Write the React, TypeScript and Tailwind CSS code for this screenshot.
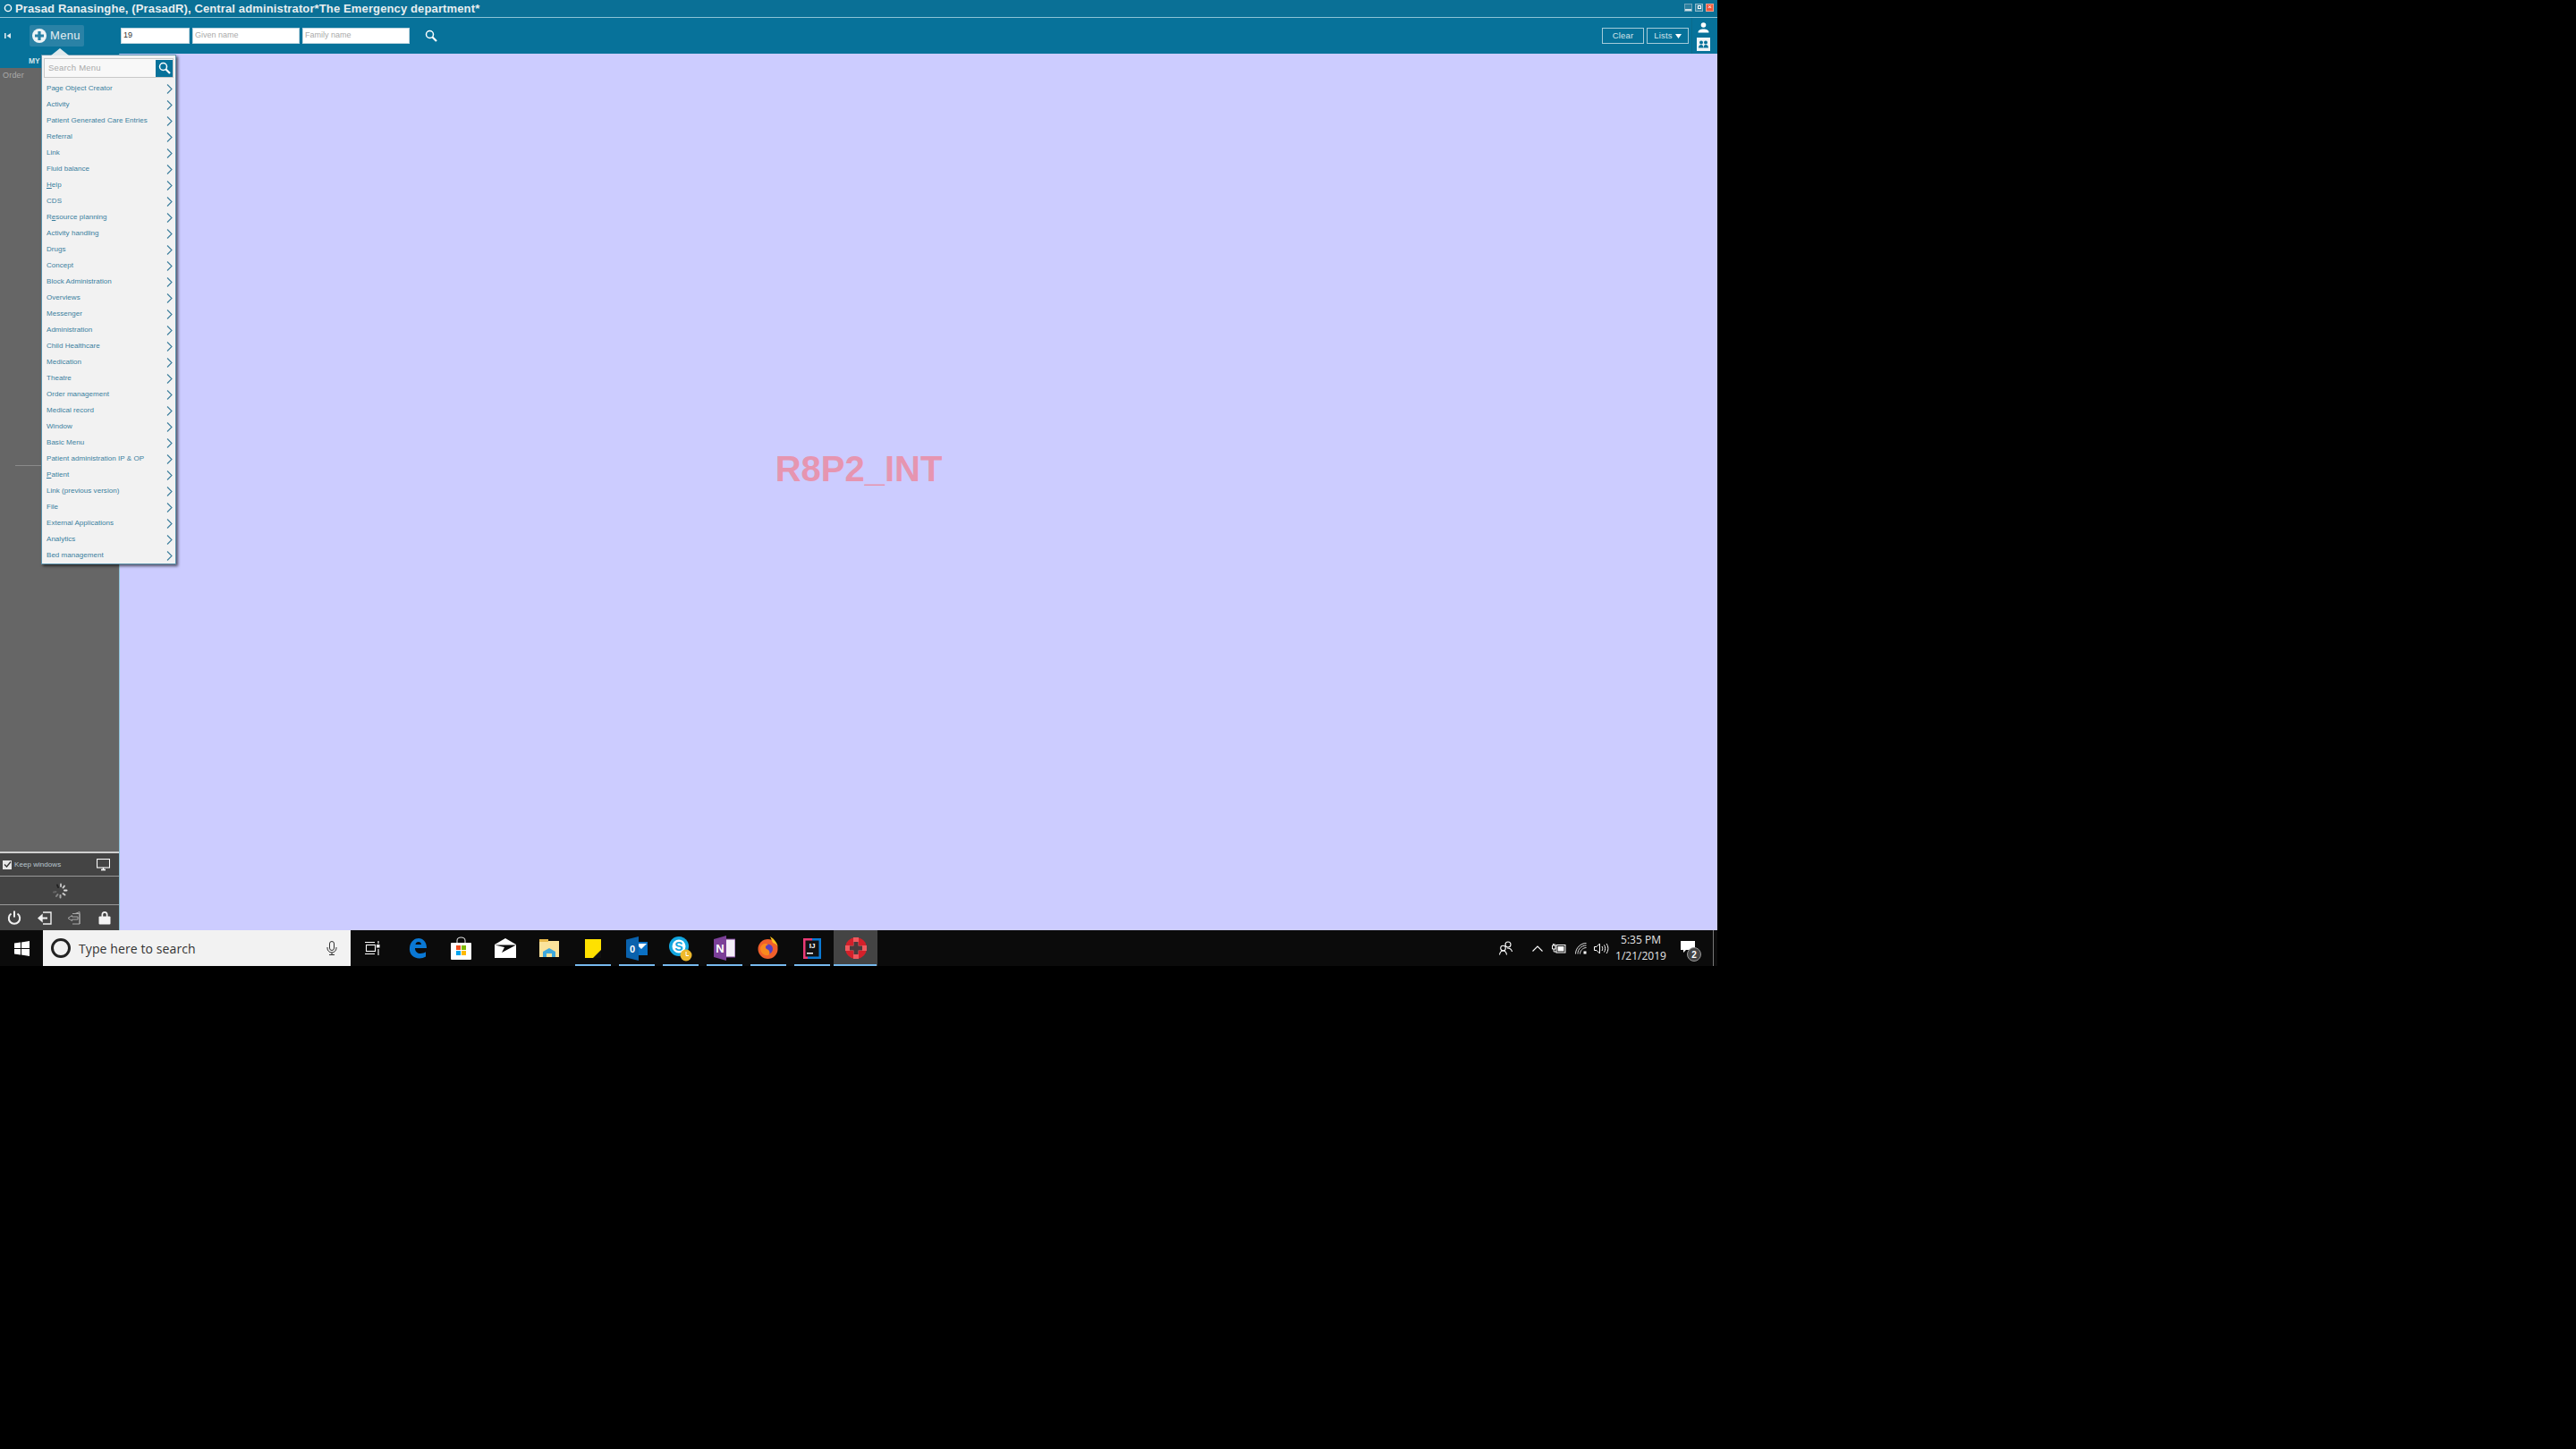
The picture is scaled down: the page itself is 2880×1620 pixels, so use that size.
import React from "react";

const items: [string, string?, string?][] = [
  ["Page Object Creator"], ["Activity"], ["Patient Generated Care Entries"], ["Referral"], ["Link"], ["Fluid balance"],
  ["", "H", "elp"], ["CDS"], ["R", "e", "source planning"], ["Activity handling"], ["Drugs"], ["Concept"],
  ["Block Administration"], ["Overviews"], ["Messenger"], ["Administration"], ["Child Healthcare"], ["Medication"],
  ["Theatre"], ["Order management"], ["Medical record"], ["Window"], ["Basic Menu"], ["Patient administration IP & OP"],
  ["", "P", "atient"], ["Link (previous version)"], ["File"], ["External Applications"], ["Analytics"], ["Bed management"],
];

function SearchIcon({ size = 14 }: { size?: number }) {
  return (
    <svg width={size} height={size} viewBox="0 0 14 14" fill="none" stroke="white">
      <circle cx="5.5" cy="5.5" r="4" strokeWidth="1.5" />
      <path d="M8.5 8.5L13 13" strokeWidth="2.2" />
    </svg>
  );
}

function Chevron() {
  return (
    <svg width="7" height="11" viewBox="0 0 7 11" fill="none" stroke="#3d7f9d" strokeWidth="1.1">
      <path d="M1 0.5L6 5.5L1 10.5" />
    </svg>
  );
}

function MenuPopup() {
  return (
    <div className="absolute left-[46px] top-[61px] w-[151px] h-[570px] bg-[#f2f2f2] border border-[#5b93ad] shadow-[2px_2px_3px_rgba(0,0,0,0.6)] z-10 flex flex-col">
      <div className="absolute left-[10px] -top-[8px] w-0 h-0 border-l-[10px] border-r-[10px] border-b-[8px] border-l-transparent border-r-transparent border-b-[#dfe9ec]" />
      <div className="mx-[2px] mt-[3px] h-[22px] bg-[#f8f8f8] border border-[#c8c8c8] flex items-center justify-between pl-[4px] pr-0">
        <span className="text-[9.5px] text-[#aaaaaa] tracking-[0.2px]">Search Menu</span>
        <span className="w-[19px] h-[19px] bg-[#07729a] flex items-center justify-center">
          <SearchIcon />
        </span>
      </div>
      <div className="flex flex-col mt-[3px]">
        {items.map((it, i) => (
          <div key={i} className="h-[18px] flex items-center justify-between pl-[5px] pr-[3px] text-[8px] text-[#3a7f9e] tracking-[0.04px] whitespace-nowrap">
            <span>
              {it[1] ? (
                <>
                  {it[0]}
                  <u>{it[1]}</u>
                  {it[2]}
                </>
              ) : (
                it[0]
              )}
            </span>
            <Chevron />
          </div>
        ))}
      </div>
    </div>
  );
}

function TitleBar() {
  return (
    <div className="h-[20px] shrink-0 bg-[#0a7096] border-b border-[#8cc3d6] flex items-center pl-[4px] pr-[4px]">
      <svg width="10" height="10" viewBox="0 0 10 10" fill="none" stroke="white" strokeWidth="1.4" className="mr-[3px] -mt-[1px]">
        <circle cx="5" cy="5" r="3.6" />
      </svg>
      <span className="text-[13px] font-bold text-[#e8eef0] tracking-[0.13px] whitespace-nowrap">
        Prasad Ranasinghe, (PrasadR), Central administrator*The Emergency department*
      </span>
      <div className="ml-auto flex gap-[3px] -mt-[3px]">
        <div className="w-[9px] h-[9px] border border-[#6fa5bb] bg-[#2c7f9f] flex items-end"><div className="w-full h-[2px] bg-[#cfe0e6]" /></div>
        <div className="w-[9px] h-[9px] border border-[#8fb9c9] bg-[#3d89a6] flex items-center justify-center"><div className="w-[4px] h-[4px] border border-white" /></div>
        <div className="w-[9px] h-[9px] bg-[#f0583c] border border-[#f5a08e] flex items-center justify-center text-white text-[8px] leading-none">×</div>
      </div>
    </div>
  );
}

function Toolbar() {
  return (
    <div className="h-[40px] shrink-0 bg-[#07729a] flex items-center">
      <svg width="8" height="8" viewBox="0 0 8 8" fill="#dfeaee" className="ml-[5px] mr-[20px]">
        <rect x="0" y="1" width="1.6" height="6" />
        <path d="M7 1V7L2.5 4Z" />
      </svg>
      <div className="w-[61px] h-[24px] bg-[#2a82a6] rounded-[2px] flex items-center pl-[3px] gap-[4px]">
        <svg width="16" height="16" viewBox="0 0 16 16">
          <circle cx="8" cy="8" r="8" fill="#eef4f6" />
          <path d="M6.4 3H9.6V6.4H13V9.6H9.6V13H6.4V9.6H3V6.4H6.4Z" fill="#2a82a6" />
        </svg>
        <span className="text-[13px] text-[#e2edf1] tracking-[0.3px]">Menu</span>
      </div>
      <div className="ml-[41px] w-[77px] h-[18px] bg-white border border-[#bcd4de] flex items-center pl-[2px] text-[9px] text-[#333]">19</div>
      <div className="ml-[3px] w-[120px] h-[18px] bg-white border border-[#bcd4de] flex items-center pl-[2px] text-[9px] text-[#aaa]">Given name</div>
      <div className="ml-[3px] w-[120px] h-[18px] bg-white border border-[#bcd4de] flex items-center pl-[2px] text-[9px] text-[#aaa]">Family name</div>
      <span className="ml-[17px]"><SearchIcon /></span>
      <div className="ml-auto flex items-center h-full">
        <div className="w-[47px] h-[18px] border border-[#a4cbd9] flex items-center justify-center text-[9.5px] text-[#d5e5eb] tracking-[0.2px]">Clear</div>
        <div className="ml-[3px] w-[47px] h-[18px] border border-[#a4cbd9] flex items-center justify-center gap-[3px] text-[9.5px] text-[#d5e5eb] tracking-[0.2px]">
          Lists
          <svg width="7" height="5" viewBox="0 0 7 5" fill="white"><path d="M0 0H7L3.5 5Z" /></svg>
        </div>
        <div className="ml-[3px] w-[29px] h-[40px] border-l border-[#0a6a8c] flex flex-col items-center pt-[5px] pr-[3px]">
          <svg width="13" height="12" viewBox="0 0 13 12" fill="white">
            <circle cx="6.5" cy="3" r="2.8" />
            <path d="M0.5 11.5C0.5 8.5 3 7.5 6.5 7.5S12.5 8.5 12.5 11.5Z" />
          </svg>
          <div className="mt-[5px] w-[15px] h-[15px] bg-[#f0f5f7] flex items-center justify-center">
            <svg width="11" height="9" viewBox="0 0 11 9" fill="#07729a">
              <circle cx="3" cy="2.5" r="2" />
              <circle cx="8" cy="2.5" r="2" />
              <path d="M0 8.5C0 6 1.5 5 3 5S5.2 6 5.4 8.5ZM5.6 8.5C5.8 6 6.5 5 8 5S11 6 11 8.5Z" />
            </svg>
          </div>
        </div>
      </div>
    </div>
  );
}

function Sidebar() {
  return (
    <div className="w-[134px] shrink-0 bg-[#666666] border-r border-[#8fc4d8] flex flex-col relative">
      <div className="h-[16px] bg-[#07729a] pl-[32px] flex items-center text-[8.5px] font-bold text-[#cfe2e9] overflow-hidden whitespace-nowrap">MY SCREEN</div>
      <div className="pl-[3px] pt-[2px] text-[9px] text-[#aaaaaa] tracking-[0.2px]">Order</div>
      <div className="absolute left-[17px] top-[460px] w-[30px] h-px bg-[#8a8a8a]" />
      <div className="mt-auto bg-[#444444] border-t-2 border-[#cfcfcf] flex flex-col">
        <div className="h-[26px] flex items-center pl-[3px] pr-[9px] border-b border-[#999]">
          <div className="w-[10px] h-[10px] bg-[#e6e6e6] flex items-center justify-center mr-[3px]">
            <svg width="9" height="9" viewBox="0 0 9 9" fill="none" stroke="#333" strokeWidth="1.4"><path d="M1 4.5L3.5 7L8 1.5" /></svg>
          </div>
          <span className="text-[8px] text-[#b9c6cf] tracking-[0.05px]">Keep windows</span>
          <svg width="15" height="14" viewBox="0 0 15 14" className="ml-auto -translate-x-[1px]" fill="none" stroke="white">
            <rect x="0.5" y="0.5" width="14" height="9.5" strokeWidth="1.1" />
            <path d="M5 12.5H10" strokeWidth="1.6" />
            <path d="M7.5 10V12" strokeWidth="1.5" />
          </svg>
        </div>
        <div className="h-[32px] flex items-center justify-center border-b border-[#999]">
          <svg width="18" height="18" viewBox="0 0 18 18" strokeWidth="2" strokeLinecap="round">
            <path d="M6 2.5L7 5" stroke="#222" />
            <path d="M10 1.5V4" stroke="#bbb" />
            <path d="M14 3.5L12.5 5.5" stroke="#ccc" />
            <path d="M16.5 8.5H14" stroke="#ddd" />
            <path d="M14.5 13.5L12.5 12" stroke="#ccc" />
            <path d="M9.5 16.5V14" stroke="#aaa" />
            <path d="M5 15L6.5 13" stroke="#888" />
            <path d="M2 10.5L4.5 10" stroke="#666" />
            <path d="M2 6.5L4.5 7.5" stroke="#444" />
          </svg>
        </div>
        <div className="h-[28px] flex items-center justify-between pl-[8px] pr-[9px]">
          <svg width="16" height="16" viewBox="0 0 16 16" fill="none" stroke="#f0f0f0" strokeWidth="2">
            <path d="M4.5 3.5A6.2 6.2 0 1 0 11.5 3.5" />
            <path d="M8 0.5V7.5" />
          </svg>
          <svg width="16" height="15" viewBox="0 0 16 15" fill="none" stroke="#f0f0f0" strokeWidth="1.4">
            <path d="M6 1H15V14H6" />
            <path d="M11 7.5H3" strokeWidth="2" />
            <path d="M5 4L1 7.5L5 11Z" fill="#f0f0f0" />
          </svg>
          <svg width="17" height="15" viewBox="0 0 17 15" fill="none" stroke="#a8a8a8" strokeWidth="1">
            <path d="M6 2.5H14V14H6M9 2.5L14 0.5V14" />
            <path d="M5.5 4.5L1 7.5L5.5 10.5V9H12V6H5.5Z" />
          </svg>
          <svg width="14" height="16" viewBox="0 0 14 16" fill="#f4f4f4">
            <path d="M3.5 7V4.5a3.5 3.5 0 0 1 7 0V7H8.8V4.5a1.8 1.8 0 0 0-3.6 0V7Z" />
            <rect x="0.5" y="6.5" width="13" height="9" rx="1" />
          </svg>
        </div>
      </div>
    </div>
  );
}

function TaskItem({ underline, active, children }: { underline?: boolean; active?: boolean; children: React.ReactNode }) {
  return (
    <div className={active ? "relative w-[49px] h-full flex items-center justify-center bg-[#444444]" : "relative w-[49px] h-full flex items-center justify-center"}>
      {children}
      {underline ? <div className={active ? "absolute bottom-0 left-0 w-[48px] h-[2px] bg-[#76b9ed]" : "absolute bottom-0 left-1/2 -translate-x-1/2 w-[40px] h-[2px] bg-[#76b9ed]"} /> : null}
    </div>
  );
}

function Taskbar() {
  return (
    <div className="h-[40px] shrink-0 bg-[#0b0b0b] flex items-center text-white">
      <div className="w-[48px] h-full flex items-center justify-center">
        <svg width="17" height="17" viewBox="0 0 17 17" fill="white">
          <path d="M0 2.6L7 1.6V8H0ZM8 1.4L17 0V8H8ZM0 9H7V15.4L0 14.4ZM8 9H17V17L8 15.6Z" />
        </svg>
      </div>
      <div className="w-[344px] h-full bg-[#f2f2f2] flex items-center pl-[9px] pr-[14px]">
        <div className="w-[22px] h-[22px] rounded-full border-[3px] border-[#222]" />
        <span className="ml-[9px] text-[14px] text-[#333] font-['Open_Sans',sans-serif] tracking-[0.1px]">Type here to search</span>
        <svg width="12" height="16" viewBox="0 0 12 16" fill="none" stroke="#333" strokeWidth="1" className="ml-auto -translate-x-[1px]">
          <rect x="3.5" y="0.5" width="5" height="10" rx="2.5" />
          <path d="M1 7V8A5 5 0 0 0 11 8V7M6 13V15.5M3 15.5H9" />
        </svg>
      </div>
      <TaskItem>
        <svg width="17" height="16" viewBox="0 0 17 16" fill="none" stroke="white" strokeWidth="1.1">
          <rect x="1.5" y="4.5" width="10" height="7" />
          <path d="M0 1.5H11M0 14.5H11M15 0V3M15 9V16" />
          <rect x="13" y="4" width="3.5" height="3.5" fill="white" stroke="none" />
        </svg>
      </TaskItem>
      <div className="w-[1px] shrink-0" />
      <TaskItem>
        <svg width="20" height="24" viewBox="0 0 20 24">
          <path d="M1 11C2 4 7 1 11 1C16 1 20 5 20 12H7C7 16 10 18 13 18C15.5 18 17.5 17.3 19 16.3V21.5C17 22.7 14.5 23.5 12 23.5C5 23.5 0 18.5 1 11ZM7.5 8H14C14 6 12.5 5 10.8 5C9 5 7.8 6.3 7.5 8Z" fill="#0a78d4" />
        </svg>
      </TaskItem>
      <TaskItem>
        <svg width="23" height="26" viewBox="0 0 23 26">
          <path d="M7 7V4.5a4.5 3.5 0 0 1 9 0V7" fill="none" stroke="#ddd" strokeWidth="1.1" />
          <rect x="0" y="7" width="23" height="19" rx="1" fill="white" />
          <rect x="6" y="10" width="5" height="5" fill="#f25022" />
          <rect x="12" y="10" width="5" height="5" fill="#7fba00" />
          <rect x="6" y="16" width="5" height="5" fill="#00a4ef" />
          <rect x="12" y="16" width="5" height="5" fill="#ffb900" />
        </svg>
      </TaskItem>
      <TaskItem>
        <svg width="24" height="22" viewBox="0 0 24 22">
          <path d="M0 7L12 0L24 7V22H0Z" fill="white" />
          <path d="M0 7.5L24 7.5L8 16L11 10Z" fill="#0b0b0b" />
        </svg>
      </TaskItem>
      <TaskItem>
        <svg width="22" height="22" viewBox="0 0 22 22">
          <path d="M0 1H8L10 3H22V21H0Z" fill="#fbe39b" />
          <rect x="0" y="1" width="10" height="3" fill="#e9b949" />
          <path d="M4 21V15L11 11L18 15V21H14V17H8V21Z" fill="#3fa9dc" />
        </svg>
      </TaskItem>
      <TaskItem underline>
        <svg width="18" height="21" viewBox="0 0 18 21">
          <rect width="18" height="21" fill="#ffe100" />
          <path d="M9 21L18 12V21Z" fill="#111" />
        </svg>
      </TaskItem>
      <TaskItem underline>
        <svg width="24" height="27" viewBox="0 0 24 27">
          <rect x="10" y="6" width="14" height="15" fill="#0a70c4" />
          <path d="M11 8H23L17 14Z" fill="white" />
          <path d="M0 3.5L14 0V27L0 23.5Z" fill="#0a62ad" />
          <text x="7" y="18" textAnchor="middle" fontSize="11" fontWeight="bold" fill="white" fontFamily="Liberation Sans">0</text>
        </svg>
      </TaskItem>
      <TaskItem underline>
        <svg width="26" height="29" viewBox="0 0 26 29">
          <circle cx="11" cy="12" r="11" fill="#12a6e0" />
          <circle cx="11" cy="12" r="7.5" fill="white" />
          <text x="11" y="17" textAnchor="middle" fontSize="14" fontWeight="bold" fill="#12a6e0" fontFamily="Liberation Sans">S</text>
          <circle cx="19" cy="22" r="6.5" fill="#eeb92c" />
          <path d="M19 18V22.5H22" fill="none" stroke="white" strokeWidth="1" />
        </svg>
      </TaskItem>
      <TaskItem underline>
        <svg width="24" height="28" viewBox="0 0 24 28">
          <rect x="10" y="4" width="14" height="20" fill="#f4eef8" stroke="#7b3f97" />
          <path d="M0 4L14 0V28L0 24Z" fill="#7b3f97" />
          <text x="7" y="19" textAnchor="middle" fontSize="13" fontWeight="bold" fill="white" fontFamily="Liberation Sans">N</text>
        </svg>
      </TaskItem>
      <TaskItem underline>
        <svg width="23" height="26" viewBox="0 0 23 26">
          <circle cx="11.5" cy="14" r="11" fill="#f1602b" />
          <path d="M14 0C19 3 23 8 23 14C23 10 20 8 17 7Z" fill="#fcc21b" />
          <circle cx="11.5" cy="14" r="5.5" fill="#5a3fc0" />
          <path d="M3 13C4 8 9 7 12 9C9 10 8 12 10 14C13 15 15 18 12 21C7 22 3 18 3 13Z" fill="#fa8a1e" />
        </svg>
      </TaskItem>
      <TaskItem underline>
        <svg width="20" height="23" viewBox="0 0 20 23">
          <rect x="0" y="0" width="20" height="23" fill="#0a7ad4" />
          <path d="M0 0H10V5H5V23H0Z" fill="#ea3a76" />
          <rect x="2.5" y="2.5" width="15" height="18" fill="#111" />
          <text x="10" y="11" textAnchor="middle" fontSize="8" fontWeight="bold" fill="white" fontFamily="Liberation Sans">IJ</text>
          <rect x="4" y="16" width="7" height="1.5" fill="white" />
        </svg>
      </TaskItem>
      <TaskItem underline active>
        <svg width="24" height="24" viewBox="0 0 24 24">
          <circle cx="12" cy="12" r="12" fill="#d4202a" />
          <path d="M9 0H15V9H24V15H15V24H9V15H0V9H9Z" fill="#ef5a5f" />
          <path d="M9.5 5H14.5V9.5H19V14.5H14.5V19H9.5V14.5H5V9.5H9.5Z" fill="#4a3a3c" />
        </svg>
      </TaskItem>
      <div className="ml-auto flex items-center h-full">
        <svg width="15" height="16" viewBox="0 0 15 16" fill="none" stroke="white" strokeWidth="1.1" className="mr-[22px]">
          <circle cx="10" cy="4" r="3" />
          <circle cx="4.5" cy="8" r="2.8" />
          <path d="M0.5 15.5C1 12 3 11 4.5 11S8 12 8.5 15.5M9 8C11.5 8 14 9 14.5 12" />
        </svg>
        <svg width="12" height="7" viewBox="0 0 12 7" fill="none" stroke="white" strokeWidth="1.1" className="mr-[10px]">
          <path d="M0.5 6.5L6 1L11.5 6.5" />
        </svg>
        <svg width="16" height="11" viewBox="0 0 16 11" fill="none" stroke="white" className="mr-[10px]">
          <rect x="5" y="1.5" width="10" height="8.5" />
          <rect x="6.5" y="3" width="7" height="5.5" fill="white" stroke="none" />
          <path d="M0.5 2V6H4V2ZM1.5 0V2M3 0V2M2.2 6V9H5" />
        </svg>
        <svg width="13" height="13" viewBox="0 0 13 13" fill="none" stroke="#ddd" className="mr-[8px]">
          <path d="M0.5 12.5C0.5 6 6 0.5 12.5 0.5M3 12.5C3 7 7 3 12.5 3M5.5 12.5C5.5 9 8.5 5.5 12.5 5.5" />
          <rect x="9.5" y="9.5" width="3" height="3" fill="white" stroke="none" />
        </svg>
        <svg width="17" height="13" viewBox="0 0 17 13" fill="none" stroke="white" className="mr-[7px]">
          <path d="M0.5 4.5H3L6.5 1V12L3 8.5H0.5Z" />
          <path d="M9 4C10 5.5 10 7.5 9 9M11.5 2.5C13 5 13 8 11.5 10.5M14 1C16.5 4.5 16.5 8.5 14 12" />
        </svg>
        <div className="w-[57px] flex flex-col items-center text-[12px] leading-[18px] text-[#e6e6e6] font-['Open_Sans',sans-serif]">
          <span>5:35 PM</span>
          <span>1/21/2019</span>
        </div>
        <div className="relative w-[52px] h-full flex items-center pl-[13px]">
          <svg width="16" height="14" viewBox="0 0 16 14" fill="white" className="-mt-[3px] translate-x-[3px]">
            <path d="M0 0H16V10H6L3 13V10H0Z" />
          </svg>
          <span className="absolute left-[23px] top-[19px] w-[16px] h-[16px] rounded-full bg-[#444] border border-[#999] flex items-center justify-center text-[10px] text-white font-bold">2</span>
        </div>
        <div className="w-[5px] h-full border-l border-[#777]" />
      </div>
    </div>
  );
}

export default function App() {
  return (
    <div className="w-[2880px] h-[1620px] bg-black font-['Liberation_Sans',Arial,sans-serif]">
      <div className="relative w-[1920px] h-[1080px] flex flex-col">
        <TitleBar />
        <Toolbar />
        <div className="flex-1 flex min-h-0">
          <Sidebar />
          <div className="flex-1 bg-[#ccccff] flex items-center justify-center pr-[134px] pb-[52px]">
            <span className="text-[40px] font-bold text-[#e695b0] leading-none">R8P2_INT</span>
          </div>
        </div>
        <Taskbar />
        <MenuPopup />
      </div>
    </div>
  );
}
